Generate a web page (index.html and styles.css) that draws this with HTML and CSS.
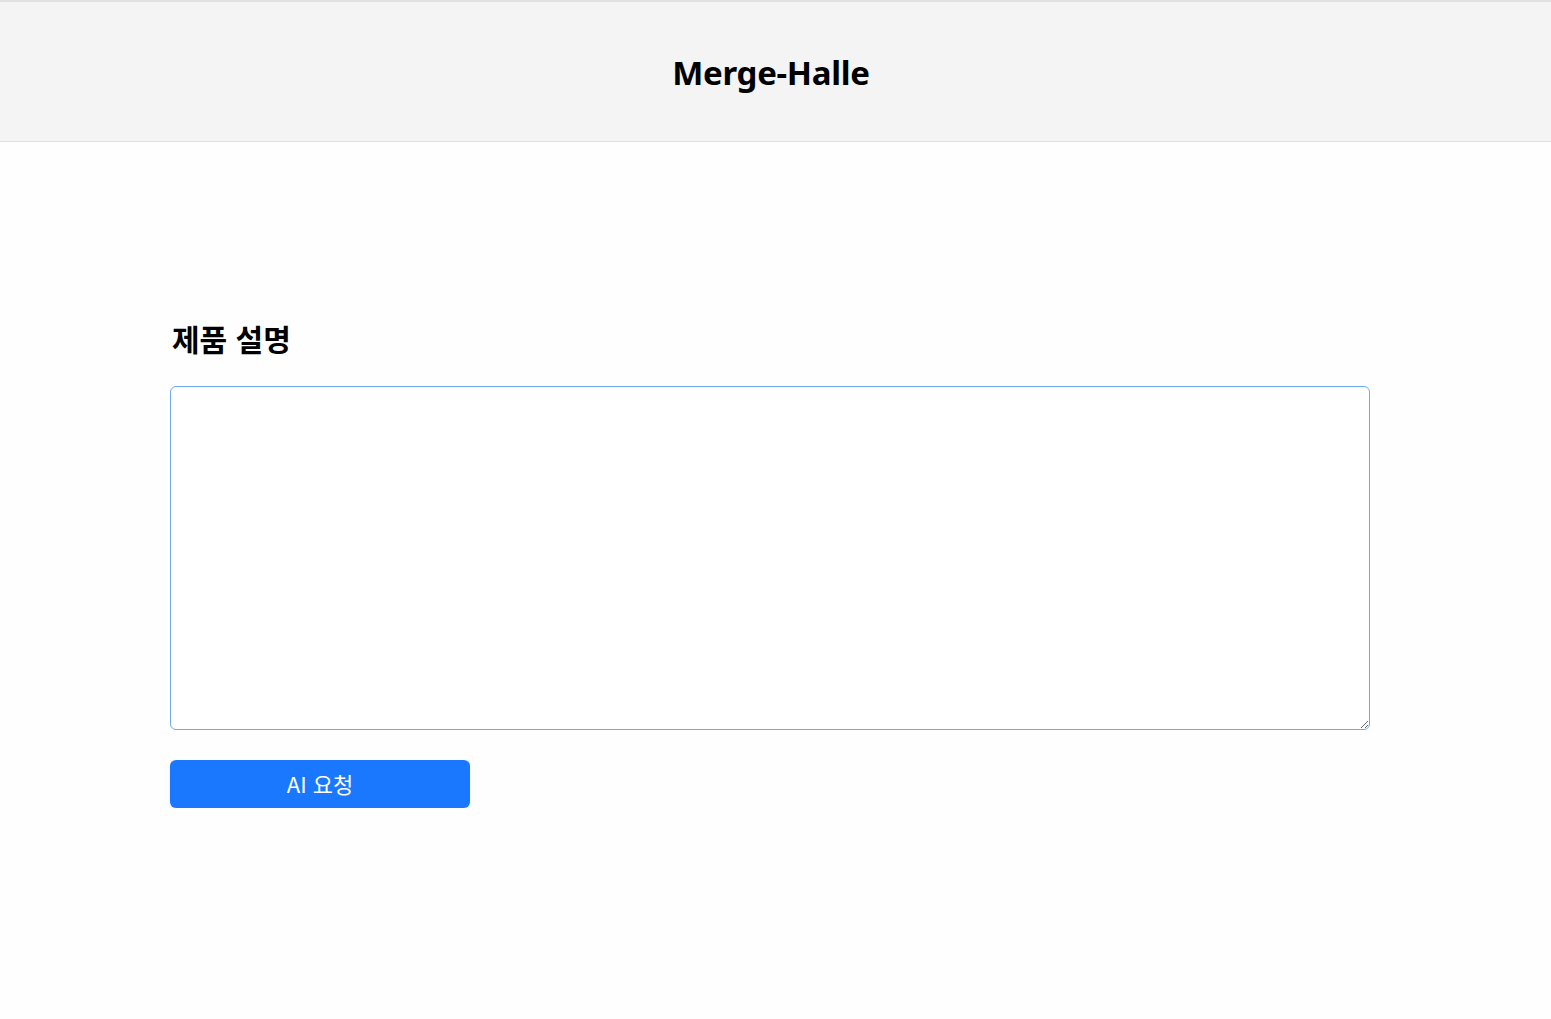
FILE: index.html
```html
<!DOCTYPE html>
<html lang="ko">
<head>
<meta charset="utf-8">
<title>Merge-Halle</title>
<link rel="stylesheet" href="styles.css">
</head>
<body>
<header class="site-header">
  <h1 class="site-title">Merge-Halle</h1>
</header>
<main class="main">
  <section class="form">
    <label class="form-label" for="desc">제품 설명</label>
    <textarea id="desc" class="form-textarea"></textarea>
    <button class="btn-primary" type="button">AI 요청</button>
  </section>
</main>
</body>
</html>
```
FILE: styles.css
```css
html, body {
  margin: 0;
  padding: 0;
}
body {
  background: #fefefe;
  font-family: "Noto Sans", "Noto Sans CJK KR", sans-serif;
  color: #000;
}
.site-header {
  height: 139px;
  border-top: 2px solid #dfe1e3;
  border-bottom: 1px solid #e0e0e0;
  background: #f4f4f4;
  display: flex;
  align-items: center;
  justify-content: center;
}
.site-title {
  margin: 2px 9px 0 0;
  font-size: 33px;
  font-weight: 700;
  letter-spacing: -0.3px;
}
.main {
  padding: 176px 170px 0 170px;
}
.form {
  width: 1200px;
  display: flex;
  flex-direction: column;
  align-items: flex-start;
}
.form-label {
  font-family: "Noto Sans CJK KR", sans-serif;
  font-size: 30px;
  font-weight: 700;
  line-height: 40px;
  padding-left: 2px;
  margin-bottom: 28px;
}
.form-textarea {
  box-sizing: border-box;
  width: 1200px;
  height: 344px;
  border: 1px solid #6ea8f4;
  border-radius: 6px;
  background: #fff;
  outline: none;
  margin: 0 0 30px 0;
  font-size: 16px;
  padding: 8px;
}
.btn-primary {
  width: 300px;
  height: 48px;
  border: none;
  border-radius: 6px;
  padding: 0 0 2px 0;
  background: #1a77ff;
  color: #fff;
  font-family: "Noto Sans CJK KR", sans-serif;
  font-size: 22px;
  box-shadow: 0 2px 3px rgba(26, 119, 255, 0.12);
  cursor: pointer;
}
```
